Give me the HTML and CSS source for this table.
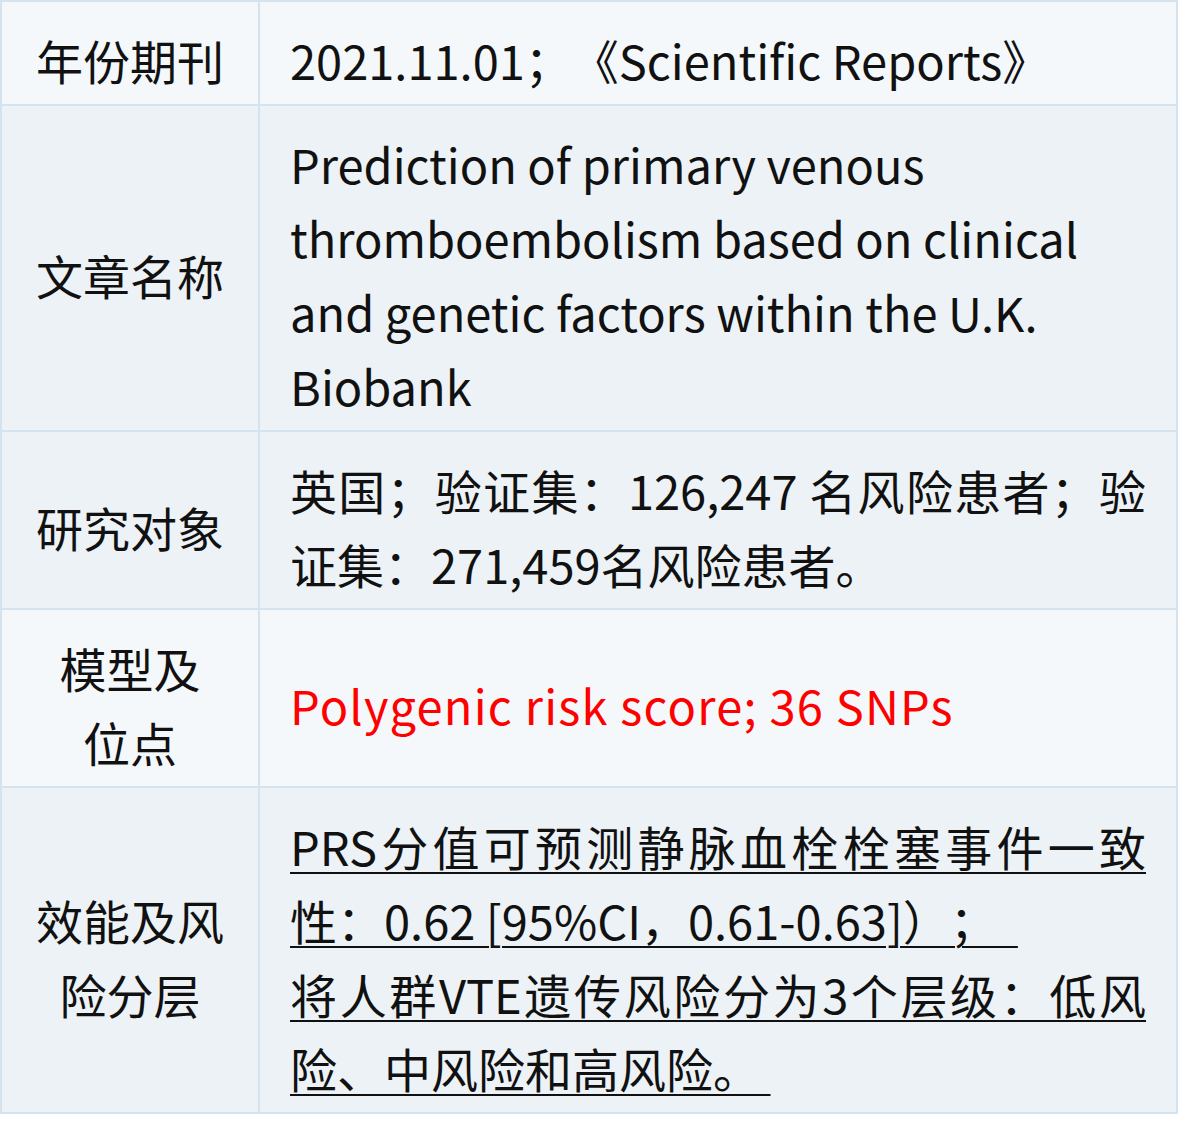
FILE: index.html
```html
<!DOCTYPE html>
<html lang="zh-CN">
<head>
<meta charset="utf-8">
<link rel="stylesheet" href="styles.css">
</head>
<body>
<table class="info">
  <colgroup>
    <col class="col-label">
    <col class="col-value">
  </colgroup>
  <tr class="light">
    <td class="label">年份期刊</td>
    <td class="value">2021.11.01；《Scientific Reports》</td>
  </tr>
  <tr class="dark">
    <td class="label">文章名称</td>
    <td class="value">Prediction of primary venous thromboembolism based on clinical and genetic factors within the U.K. Biobank</td>
  </tr>
  <tr class="dark">
    <td class="label">研究对象</td>
    <td class="value justify">英国；验证集：126,247 名风险患者；验证集：271,459名风险患者。</td>
  </tr>
  <tr class="light">
    <td class="label">模型及<br>位点</td>
    <td class="value red">Polygenic risk score; 36 SNPs</td>
  </tr>
  <tr class="dark">
    <td class="label">效能及风<br>险分层</td>
    <td class="value justify"><p class="u">PRS分值可预测静脉血栓栓塞事件一致性：0.62 [95%CI，0.61-0.63]）；&nbsp;&nbsp;</p><p class="u">将人群VTE遗传风险分为3个层级：低风险、中风险和高风险。&nbsp;</p></td>
  </tr>
</table>
</body>
</html>
```
FILE: styles.css
```css
html, body {
  margin: 0;
  padding: 0;
  background: #ffffff;
}
body {
  font-family: "Noto Sans CJK SC", "Noto Sans", sans-serif;
  color: #111111;
  text-spacing-trim: space-all;
}
.info {
  border-collapse: collapse;
  table-layout: fixed;
  width: 1176px;
}
.col-label { width: 258px; }
.col-value { width: 918px; }
.info td {
  border: 2px solid #d5e3ee;
  font-size: 47px;
  line-height: 74px;
  padding: 21px 30px 7px;
  vertical-align: middle;
}
.light td { background: #f4f8fb; }
.dark td { background: #ecf2f6; }
.info td.label {
  text-align: center;
  padding: 21px 10px 7px;
}
.value {
  text-align: left;
}
.justify {
  text-align: justify;
}
.red {
  color: #ff0000;
  letter-spacing: 1.2px;
}
.u {
  margin: 0;
  text-decoration: underline;
  text-decoration-thickness: 2px;
  text-underline-offset: 6px;
}
```
